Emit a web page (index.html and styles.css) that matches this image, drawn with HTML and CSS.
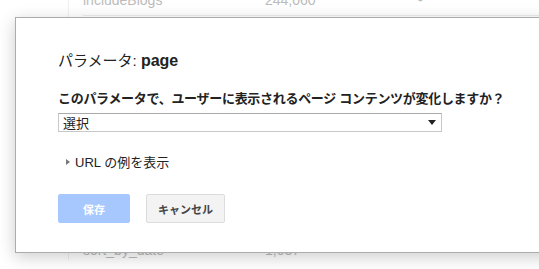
FILE: index.html
```html
<!DOCTYPE html>
<html lang="ja">
<head>
    <meta charset="UTF-8">
    <meta name="viewport" content="width=device-width, initial-scale=1.0">
    <title>URL パラメータ</title>
    <link rel="stylesheet" href="styles.css">
</head>
<body>
    <div class="page">
        <div class="list">
            <div class="row row-top">
                <span class="col-name">includeBlogs</span>
                <span class="col-count">244,060</span>
                <span class="col-mode">-</span>
            </div>
            <div class="row row-bottom">
                <span class="col-name">sort_by_date</span>
                <span class="col-count">1,037</span>
                <span class="col-mode">-</span>
            </div>
        </div>
    </div>

    <div class="dialog">
        <div class="dialog-title">パラメータ: <b>page</b></div>

        <div class="question">このパラメータで、ユーザーに表示されるページ コンテンツが変化しますか？</div>
        <div class="select">
            <span>選択</span>
            <span class="select-arrow"></span>
        </div>

        <div class="examples">
            <span class="examples-arrow"></span>
            <span>URL の例を表示</span>
        </div>

        <div class="buttons">
            <button class="btn btn-save" disabled>保存</button>
            <button class="btn btn-cancel">キャンセル</button>
        </div>
    </div>
</body>
</html>
```

FILE: styles.css
```css
body {
    font-family: Arial, "Liberation Sans", "Noto Sans CJK JP", sans-serif;
    margin: 0;
    padding: 0;
    background: #fff;
    overflow: hidden;
}
.page {
    margin-left: 68px;
    height: 269px;
    border-left: 1px solid #f0f0f0;
}
.list {
    padding-left: 14px;
}
.row {
    display: flex;
    font-size: 14px;
    color: #bbb;
    line-height: 18px;
    border-bottom: 1px solid #eee;
}
.row-top {
    margin-top: -9px;
    padding-bottom: 6px;
}
.row-bottom {
    margin-top: 226px;
    line-height: 16px;
    padding-bottom: 5px;
}
.col-name {
    width: 182px;
}
.col-count {
    width: 153px;
}
.dialog {
    position: absolute;
    left: 15px;
    top: 17px;
    width: 600px;
    height: 236px;
    background: #fff;
    border: 1px solid #acacac;
    box-shadow: 0 4px 16px rgba(0, 0, 0, 0.2);
    padding-left: 42px;
    box-sizing: border-box;
}
.dialog-title {
    margin-top: 33px;
    font-size: 15px;
    color: #222;
    line-height: 20px;
}
.dialog-title b {
    font-size: 16px;
}
.question {
    margin-top: 19px;
    font-size: 13px;
    font-weight: bold;
    color: #222;
    line-height: 18px;
    letter-spacing: -0.3px;
}
.select {
    margin-top: 5px;
    width: 384px;
    height: 19px;
    box-sizing: border-box;
    border: 1px solid #c8c8c8;
    border-top-color: #aaa;
    display: flex;
    align-items: center;
    justify-content: space-between;
    padding: 0 5px 0 4px;
    font-size: 13px;
    color: #222;
}
.select-arrow {
    width: 0;
    height: 0;
    border-left: 4px solid transparent;
    border-right: 4px solid transparent;
    border-top: 5px solid #222;
}
.examples {
    margin-top: 20px;
    display: flex;
    align-items: center;
    gap: 5px;
    padding-left: 8px;
    font-size: 13px;
    color: #222;
}
.examples-arrow {
    width: 0;
    height: 0;
    border-top: 3px solid transparent;
    border-bottom: 3px solid transparent;
    border-left: 4px solid #777;
}
.buttons {
    margin-top: 23px;
    display: flex;
    gap: 16px;
}
.btn {
    height: 29px;
    border-radius: 2px;
    font-family: inherit;
    font-size: 11px;
    font-weight: bold;
    padding: 0;
}
.btn-save {
    width: 72px;
    background: #a6c8ff;
    border: 1px solid #a6c8ff;
    color: #fff;
}
.btn-cancel {
    width: 79px;
    background: #f3f3f3;
    border: 1px solid #dcdcdc;
    color: #444;
}
```
